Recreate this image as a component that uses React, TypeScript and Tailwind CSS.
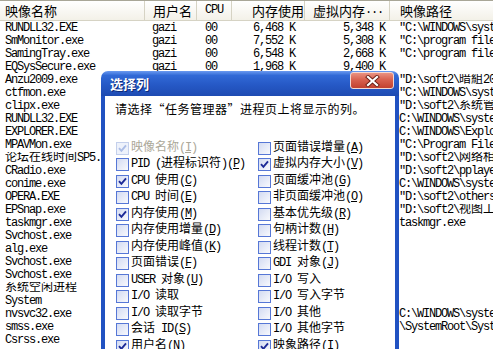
import React from 'react';

type Proc = { name: string; user?: string; cpu?: string; mem?: string; vm?: string; path: string };

// only the first rows show their middle columns; the rest sit behind the dialog
const processes: Proc[] = [
  { name: 'RUNDLL32.EXE', user: 'gazi', cpu: '00', mem: '6,468 K', vm: '5,348 K', path: '"C:\\WINDOWS\\system32\\rundll32.exe"' },
  { name: 'SmMonitor.exe', user: 'gazi', cpu: '00', mem: '7,552 K', vm: '5,308 K', path: '"C:\\program files\\smmonitor.exe"' },
  { name: 'SamingTray.exe', user: 'gazi', cpu: '00', mem: '6,548 K', vm: '2,668 K', path: '"C:\\program files\\samingtray.exe"' },
  { name: 'EQSysSecure.exe', user: 'gazi', cpu: '00', mem: '1,968 K', vm: '9,400 K', path: '' },
  { name: 'Anzu2009.exe', path: '"D:\\soft2\\暗組2009\\Anzu2009.exe"' },
  { name: 'ctfmon.exe', path: '"C:\\WINDOWS\\system32\\ctfmon.exe"' },
  { name: 'clipx.exe', path: '"D:\\soft2\\系统管理\\clipx.exe"' },
  { name: 'RUNDLL32.EXE', path: 'C:\\WINDOWS\\system32\\rundll32.exe' },
  { name: 'EXPLORER.EXE', path: 'C:\\WINDOWS\\Explorer.EXE' },
  { name: 'MPAVMon.exe', path: '"C:\\Program Files\\MPAV\\MPAVMon.exe"' },
  { name: '论坛在线时间SP5.exe', path: '"D:\\soft2\\网络相关\\SP5.exe"' },
  { name: 'CRadio.exe', path: '"D:\\soft2\\pplayer\\CRadio.exe"' },
  { name: 'conime.exe', path: 'C:\\WINDOWS\\system32\\conime.exe' },
  { name: 'OPERA.EXE', path: '"D:\\soft2\\others\\Opera\\OPERA.EXE"' },
  { name: 'EPSnap.exe', path: '"D:\\soft2\\视图工具\\EPSnap.exe"' },
  { name: 'taskmgr.exe', path: 'taskmgr.exe' },
  { name: 'Svchost.exe', path: '' },
  { name: 'alg.exe', path: '' },
  { name: 'Svchost.exe', path: '' },
  { name: 'Svchost.exe', path: '' },
  { name: '系统空闲进程', path: '' },
  { name: 'System', path: '' },
  { name: 'nvsvc32.exe', path: 'C:\\WINDOWS\\system32\\nvsvc32.exe' },
  { name: 'smss.exe', path: '\\SystemRoot\\System32\\smss.exe' },
  { name: 'Csrss.exe', path: '' },
];

type Option = { label: string; key?: string; checked?: boolean; disabled?: boolean };

const leftOptions: Option[] = [
  { label: '映像名称', key: 'I', checked: true, disabled: true },
  { label: 'PID (进程标识符)', key: 'P' },
  { label: 'CPU 使用', key: 'C', checked: true },
  { label: 'CPU 时间', key: 'E' },
  { label: '内存使用', key: 'M', checked: true },
  { label: '内存使用增量', key: 'D' },
  { label: '内存使用峰值', key: 'K' },
  { label: '页面错误', key: 'F' },
  { label: 'USER 对象', key: 'U' },
  { label: 'I/O 读取' },
  { label: 'I/O 读取字节' },
  { label: '会话 ID', key: 'S' },
  { label: '用户名', key: 'N', checked: true },
];

const rightOptions: Option[] = [
  { label: '页面错误增量', key: 'A' },
  { label: '虚拟内存大小', key: 'V', checked: true },
  { label: '页面缓冲池', key: 'G' },
  { label: '非页面缓冲池', key: 'O' },
  { label: '基本优先级', key: 'R' },
  { label: '句柄计数', key: 'H' },
  { label: '线程计数', key: 'T' },
  { label: 'GDI 对象', key: 'J' },
  { label: 'I/O 写入' },
  { label: 'I/O 写入字节' },
  { label: 'I/O 其他' },
  { label: 'I/O 其他字节' },
  { label: '映象路径', key: 'I', checked: true },
];

// ASCII runs get squeezed to the half-width pitch of the old bitmap font
const Mixed = ({ text }: { text?: string }) => (
  <>
    {(text ?? '')
      .split(/([\x20-\x7e]+)/)
      .filter(Boolean)
      .map((part, i) =>
        /^[\x20-\x7e]+$/.test(part) ? (
          <span key={i} className="tracking-[-1.2px]">
            {part}
          </span>
        ) : (
          <span key={i}>{part}</span>
        ),
      )}
  </>
);

const CheckBox = ({ checked, disabled }: { checked?: boolean; disabled?: boolean }) => (
  <span
    className={`flex h-[13px] w-[13px] shrink-0 items-center justify-center border ${
      disabled
        ? 'border-[#c4d0ec] bg-[#eef2fb]'
        : 'border-[#5677d6] bg-[linear-gradient(135deg,#d3dbf2,#f8f9fd)]'
    }`}
  >
    {checked && (
      <svg width="9" height="9" viewBox="0 0 9 9">
        <path
          d="M1 4.2 L3.4 6.8 L8 1.4"
          fill="none"
          stroke={disabled ? '#abbde6' : '#1c2a97'}
          strokeWidth="1.9"
        />
      </svg>
    )}
  </span>
);

const OptionRow = ({ opt }: { opt: Option }) => (
  <div className="flex h-[16.5px] items-center gap-[2px]">
    <CheckBox checked={opt.checked} disabled={opt.disabled} />
    <span className={`whitespace-nowrap leading-[13px] ${opt.disabled ? 'text-[#aca899]' : 'text-black'}`}>
      <Mixed text={opt.label} />
      {opt.key && (
        <span className="tracking-[-1.2px]">
          (<u>{opt.key}</u>)
        </span>
      )}
    </span>
  </div>
);

const ColumnDialog = () => (
  <div className="absolute left-[101px] top-[71px] flex h-[300px] w-[298px] flex-col">
    <div className="flex h-[25px] shrink-0 items-start justify-between rounded-t-[7px] bg-[linear-gradient(to_bottom,#6a9af0_0%,#3169d6_18%,#2659c6_55%,#1e4bb2_100%)] pl-[9px] pr-[5px]">
      <span className="mt-[5px] font-['Noto_Sans_CJK_SC',sans-serif] text-[13px] font-bold leading-[15px] text-white [text-shadow:1px_1px_0_#0d2a78]">
        选择列
      </span>
      <span className="mt-[1px] flex h-[17px] w-[44px] items-center justify-center rounded-[3px] border border-[#f3d8d2] bg-[linear-gradient(to_bottom,#e99282_0%,#d8614f_45%,#c2412f_100%)]">
        <svg width="15" height="12" viewBox="0 0 15 12">
          <path d="M3 2 L12 10 M12 2 L3 10" stroke="#6b2016" strokeWidth="4" strokeLinecap="square" />
          <path d="M3 2 L12 10 M12 2 L3 10" stroke="#ffffff" strokeWidth="2.2" strokeLinecap="square" />
        </svg>
      </span>
    </div>
    <div className="flex-1 border-x-[4px] border-l-[#2152c2] border-r-[#2152c2] bg-white pl-[10px] pt-[6px] font-['Liberation_Mono','Noto_Sans_CJK_SC',monospace] text-[12px]">
      <div className="whitespace-nowrap font-['Noto_Sans_CJK_SC',sans-serif] leading-[13px] tracking-[0.5px] text-black">
        请选择“任务管理器”进程页上将显示的列。
      </div>
      <div className="mt-[25px] flex">
        <div className="flex w-[143px] flex-col pl-[1px]">
          {leftOptions.map((o) => (
            <OptionRow key={o.label} opt={o} />
          ))}
        </div>
        <div className="flex flex-col">
          {rightOptions.map((o) => (
            <OptionRow key={o.label} opt={o} />
          ))}
        </div>
      </div>
    </div>
  </div>
);

const headCell = 'flex h-full items-center border-r border-[#d6d3c4] overflow-hidden whitespace-nowrap';

export default function App() {
  return (
    <div className="relative h-[349px] w-[493px] overflow-hidden bg-white font-['Liberation_Mono','Noto_Sans_CJK_SC',monospace] text-[12px] text-black">
      <div className="grid h-[21px] grid-cols-[145px_52px_35px_73px_85px_1fr] border-t border-b border-t-[#a8a697] border-b-[#d6d3c4] bg-[linear-gradient(to_bottom,#ffffff,#f3f1e8)] font-['Noto_Sans_CJK_SC',sans-serif] text-[13px] leading-[15px]">
        <div className={`${headCell} pl-[5px]`}>映像名称</div>
        <div className={`${headCell} pl-[8px]`}>用户名</div>
        <div className={`${headCell} pl-[8px] font-['Liberation_Mono',monospace] text-[12px] tracking-[-1.2px]`}>CPU</div>
        <div className={`${headCell} pl-[20px]`}>内存使用</div>
        <div className={`${headCell} pl-[8px]`}>
          虚拟内存<span className="font-['Liberation_Mono',monospace] text-[12px] tracking-[-1.2px]">...</span>
        </div>
        <div className="flex h-full items-center whitespace-nowrap pl-[10px]">映像路径</div>
      </div>
      <div className="flex flex-col pt-[1px]">
        {processes.map((p, i) => (
          <div
            key={i}
            className="grid h-[13px] grid-cols-[145px_52px_35px_73px_85px_1fr] items-center whitespace-nowrap leading-[13px]"
          >
            <div className="overflow-hidden pl-[5px]">
              <Mixed text={p.name} />
            </div>
            <div className="overflow-hidden pl-[7px]">
              <Mixed text={p.user} />
            </div>
            <div className="pl-[8px]">
              <Mixed text={p.cpu} />
            </div>
            <div className="pr-[10px] text-right">
              <Mixed text={p.mem} />
            </div>
            <div className="pr-[5px] text-right">
              <Mixed text={p.vm} />
            </div>
            <div className="overflow-hidden pl-[9px]">
              <Mixed text={p.path} />
            </div>
          </div>
        ))}
      </div>
      <ColumnDialog />
    </div>
  );
}
